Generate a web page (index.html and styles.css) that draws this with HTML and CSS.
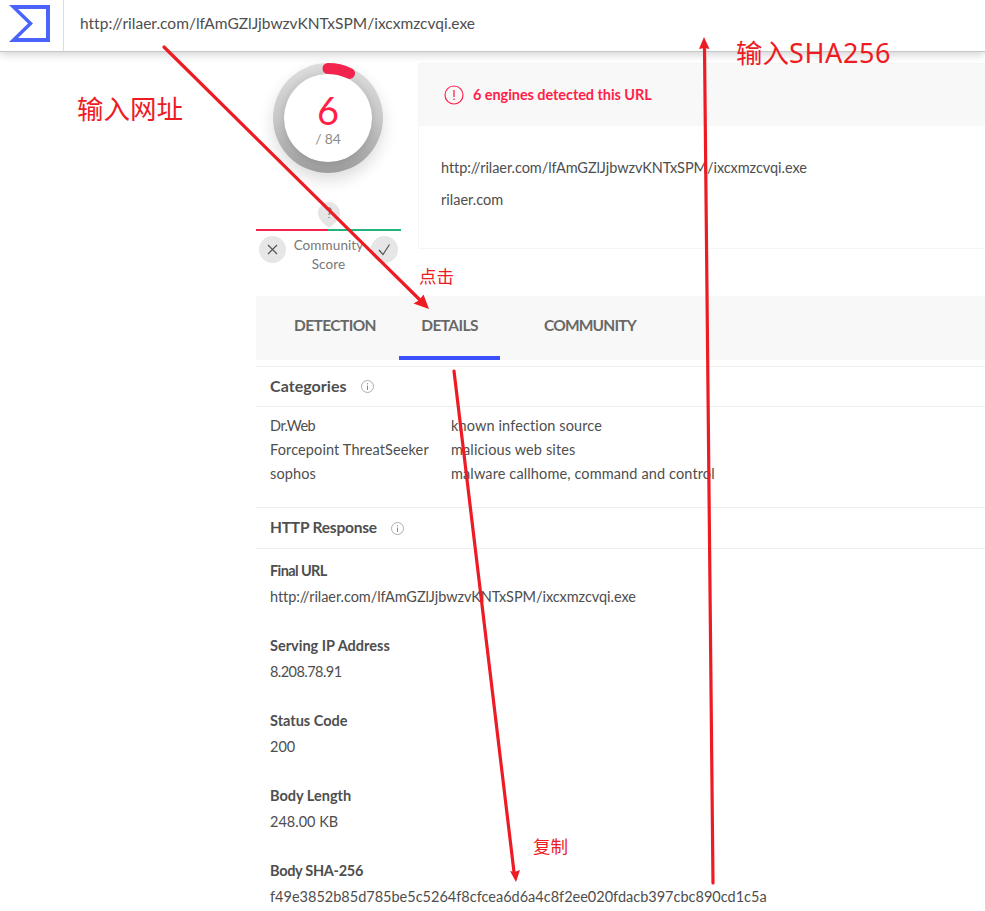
FILE: index.html
```
<!DOCTYPE html>
<html lang="en">
<head>
<meta charset="utf-8">
<title>URL report</title>
<link rel="stylesheet" href="styles.css">
</head>
<body>
<header class="topbar">
  <div class="brand"><svg width="42" height="38" viewBox="0 0 42 38"><path d="M0 0H41V37H0L19 18.500ZM9 4L24 18.500L9 33H37V4Z" fill="#4a64fb" fill-rule="evenodd"/></svg></div>
  <div class="query"><span>http://rilaer.com/lfAmGZlJjbwzvKNTxSPM/ixcxmzcvqi.exe</span></div>
</header>
<main class="report">
  <div class="summary">
    <section class="score">
      <div class="ring">
        <svg class="arc" width="110" height="110" viewBox="0 0 110 110"><path d="M55 5.500A49.500 49.500 0 0 1 76.500 10.400" fill="none" stroke="#f2244d" stroke-width="11" stroke-linecap="round"/></svg>
        <div class="disc"><b class="count">6</b><span class="total">/ 84</span></div>
      </div>
      <svg class="pin" width="24" height="27" viewBox="0 0 24 27"><path d="M12 0C18 0 23 5 23 11C23 17 18 21 12 26C6 21 1 17 1 11C1 5 6 0 12 0Z" fill="#e5e5e5"/><path d="M10 8C10 5 14 5 14 8C14 10 12 10 12 13M12 15V16" fill="none" stroke="#777" stroke-width="1.200"/></svg>
      <div class="scale"></div>
      <div class="votes">
        <svg width="27" height="27" viewBox="0 0 27 27"><circle cx="13.500" cy="13.500" r="13.500" fill="#e6e6e6"/><path d="M9 9L18 18M18 9L9 18" stroke="#555" stroke-width="1.200"/></svg>
        <p>Community<br>Score</p>
        <svg width="27" height="27" viewBox="0 0 27 27"><circle cx="13.500" cy="13.500" r="13.500" fill="#e6e6e6"/><path d="M8 14L12 18.500L18.500 8.500" fill="none" stroke="#555" stroke-width="1.200"/></svg>
      </div>
    </section>
    <section class="card">
      <div class="alert">
        <svg width="20" height="20" viewBox="0 0 20 20"><circle cx="10" cy="10" r="9" fill="none" stroke="#ff2450" stroke-width="1.200"/><path d="M10 5V12M10 13.500V15" stroke="#ff2450" stroke-width="1.300"/></svg>
        <span>6 engines detected this URL</span>
      </div>
      <div class="target"><span class="url">http://rilaer.com/lfAmGZlJjbwzvKNTxSPM/ixcxmzcvqi.exe</span><span>rilaer.com</span></div>
    </section>
  </div>
  <nav class="tabs"><a class="t1">DETECTION</a><a class="t2 active">DETAILS</a><a class="t3">COMMUNITY</a></nav>
  <h2 class="title first"><span class="cat">Categories</span><svg width="13" height="13" viewBox="0 0 13 13"><circle cx="6.500" cy="6.500" r="6" fill="none" stroke="#999" stroke-width=".8"/><path d="M6.500 5.500V10M6.500 3.200V4.300" stroke="#888"/></svg></h2>
  <dl class="categories">
    <dt class="web">Dr.Web</dt><dd>known infection source</dd>
    <dt>Forcepoint ThreatSeeker</dt><dd>malicious web sites</dd>
    <dt>sophos</dt><dd>malware callhome, command and control</dd>
  </dl>
  <h2 class="title"><span class="http">HTTP Response</span><svg width="13" height="13" viewBox="0 0 13 13"><circle cx="6.500" cy="6.500" r="6" fill="none" stroke="#999" stroke-width=".8"/><path d="M6.500 5.500V10M6.500 3.200V4.300" stroke="#888"/></svg></h2>
  <dl class="response">
    <div><dt class="final">Final URL</dt><dd class="url">http://rilaer.com/lfAmGZlJjbwzvKNTxSPM/ixcxmzcvqi.exe</dd></div>
    <div><dt>Serving IP Address</dt><dd class="ip">8.208.78.91</dd></div>
    <div><dt>Status Code</dt><dd>200</dd></div>
    <div><dt>Body Length</dt><dd>248.00 KB</dd></div>
    <div><dt class="sha">Body SHA-256</dt><dd class="hash">f49e3852b85d785be5c5264f8cfcea6d6a4c8f2ee020fdacb397cbc890cd1c5a</dd></div>
  </dl>
</main>
<svg class="arrows" width="985" height="911" viewBox="0 0 985 911">
  <g stroke="#ed1c24" stroke-width="3.200" stroke-linecap="round"><path d="M164 47L421 301M454 371L514 872M713 883L704.500 47"/></g>
  <g fill="#ed1c24"><path d="M429 309L413.500 303.500L419.500 300L423.500 294.500ZM516 882L510 871L514.500 872L520 870ZM704 37L709.500 49L704.500 48L699 49Z"/></g>
</svg>
<span class="note n1">输入网址</span>
<span class="note n2">输入<span class="latin">SHA256</span></span>
<span class="note small n3">点击</span>
<span class="note small n4">复制</span>
</body>
</html>
```
FILE: styles.css
```
* { box-sizing: border-box; }
body { margin: 0; position: relative; width: 985px; height: 911px; overflow: hidden; background: #fff; color: #4e4e4e; font: 14.5px "Lato", "Liberation Sans", sans-serif; }
svg { display: block; flex: none; }
p, dl, dd, h2 { margin: 0; }
span, dt, dd { white-space: nowrap; }
.topbar { position: relative; display: flex; height: 52px; background: #fff; border-bottom: 1px solid #c6c8c8; box-shadow: 0 2px 9px rgba(0,0,0,.2); }
.brand { width: 64px; padding: 5px 0 0 9px; border-right: 1px solid #dedede; }
.query { padding-left: 16px; line-height: 47px; font-size: 15.5px; letter-spacing: .01px; }
.report { padding-left: 256px; }
.summary { display: flex; height: 244px; }
.score { width: 145px; margin-right: 17px; padding-top: 11px; display: flex; flex-direction: column; align-items: center; }
.ring { position: relative; width: 110px; height: 110px; margin-left: -1px; padding: 11px; border-radius: 50%; background: radial-gradient(circle at 50% 54%, #8f8f8f 40%, #b5b5b5 58%, #dcdcdc 74%); box-shadow: 0 7px 16px rgba(0,0,0,.14); background: linear-gradient(#ddd, #c9c9c9 50%, #9d9d9d); }
.arc { position: absolute; left: 0; top: 0; }
.disc { height: 88px; border-radius: 50%; background: #fff; display: flex; flex-direction: column; align-items: center; box-shadow: 0 1px 10px rgba(0,0,0,.16); }
.count { padding-top: 13px; font-size: 38px; line-height: 46px; font-weight: 400; color: #ff1f49; }
.total { line-height: 18px; margin-top: -3px; font-size: 14px; color: #8c8c8c; letter-spacing: -.2px; }
.pin { margin: 29px 0 0 1px; }
.scale { width: 145px; height: 2px; background: linear-gradient(90deg, #f5204e 50%, #24b37a 50%); }
.votes { width: 139px; margin-top: 5px; display: flex; justify-content: space-between; font-size: 13.5px; line-height: 19px; text-align: center; color: #777; }
.votes p { margin: 0 -10px; letter-spacing: .1px; }
.card { width: 567px; height: 186px; margin-top: 11px; border: 1px solid #f5f5f5; border-right: 0; }
.alert { height: 62px; padding-left: 25px; display: flex; align-items: center; gap: 9px; background: #f8f8f8; color: #ff1f49; font-weight: 700; font-size: 14.5px; letter-spacing: -.07px; }
.alert span { padding-bottom: 2px; }
.target { padding: 26px 22px; display: flex; flex-direction: column; line-height: 32px; }
.url { letter-spacing: -.06px; }
.tabs { display: flex; height: 64px; background: #f8f8f8; color: #686868; font-size: 15.5px; font-weight: 700; line-height: 59px; letter-spacing: -.6px; }
.tabs a { display: block; height: 64px; text-align: center; white-space: nowrap; }
.t1 { width: 101px; margin-left: 28.500px; margin-right: 13.500px; }
.t2 { width: 101px; }
.t3 { width: 110px; margin-left: 35px; }
.tabs .t3 { letter-spacing: -.8px; }
.active { border-bottom: 4px solid #3b4ffb; }
.title { display: flex; align-items: center; gap: 14px; height: 42px; padding-left: 14px; border: 1px solid #eee; border-width: 1px 0; font-size: 15.5px; font-weight: 700; }
.title span { padding-bottom: 2px; }
.first { height: 41px; margin-top: 6px; }
.cat { font-size: 16px; letter-spacing: .05px; }
.http { letter-spacing: -.2px; }
.categories { display: grid; grid-template-columns: 181px 1fr; padding: 7px 0 21px 14px; line-height: 24px; letter-spacing: .12px; }
.web { letter-spacing: -.5px; }
.response { display: grid; gap: 23px; padding: 9px 0 0 14px; line-height: 26px; }
.response dt { font-weight: 700; }
.response .final { letter-spacing: -.6px; }
.response .sha { letter-spacing: -.3px; }
.ip { letter-spacing: -.55px; }
.arrows { position: absolute; left: 0; top: 0; }
.note { position: absolute; color: #ed1c24; font-family: "Noto Sans CJK SC", sans-serif; font-size: 26.500px; font-weight: 400; line-height: 36px; }
.n1 { left: 77px; top: 90px; }
.n2 { left: 736px; top: 34px; }
.latin { font-family: "Noto Sans", sans-serif; font-size: 27px; letter-spacing: .6px; }
.small { font-size: 17.500px; line-height: 24px; }
.n3 { left: 419px; top: 264px; }
.n4 { left: 533px; top: 834px; }
```
